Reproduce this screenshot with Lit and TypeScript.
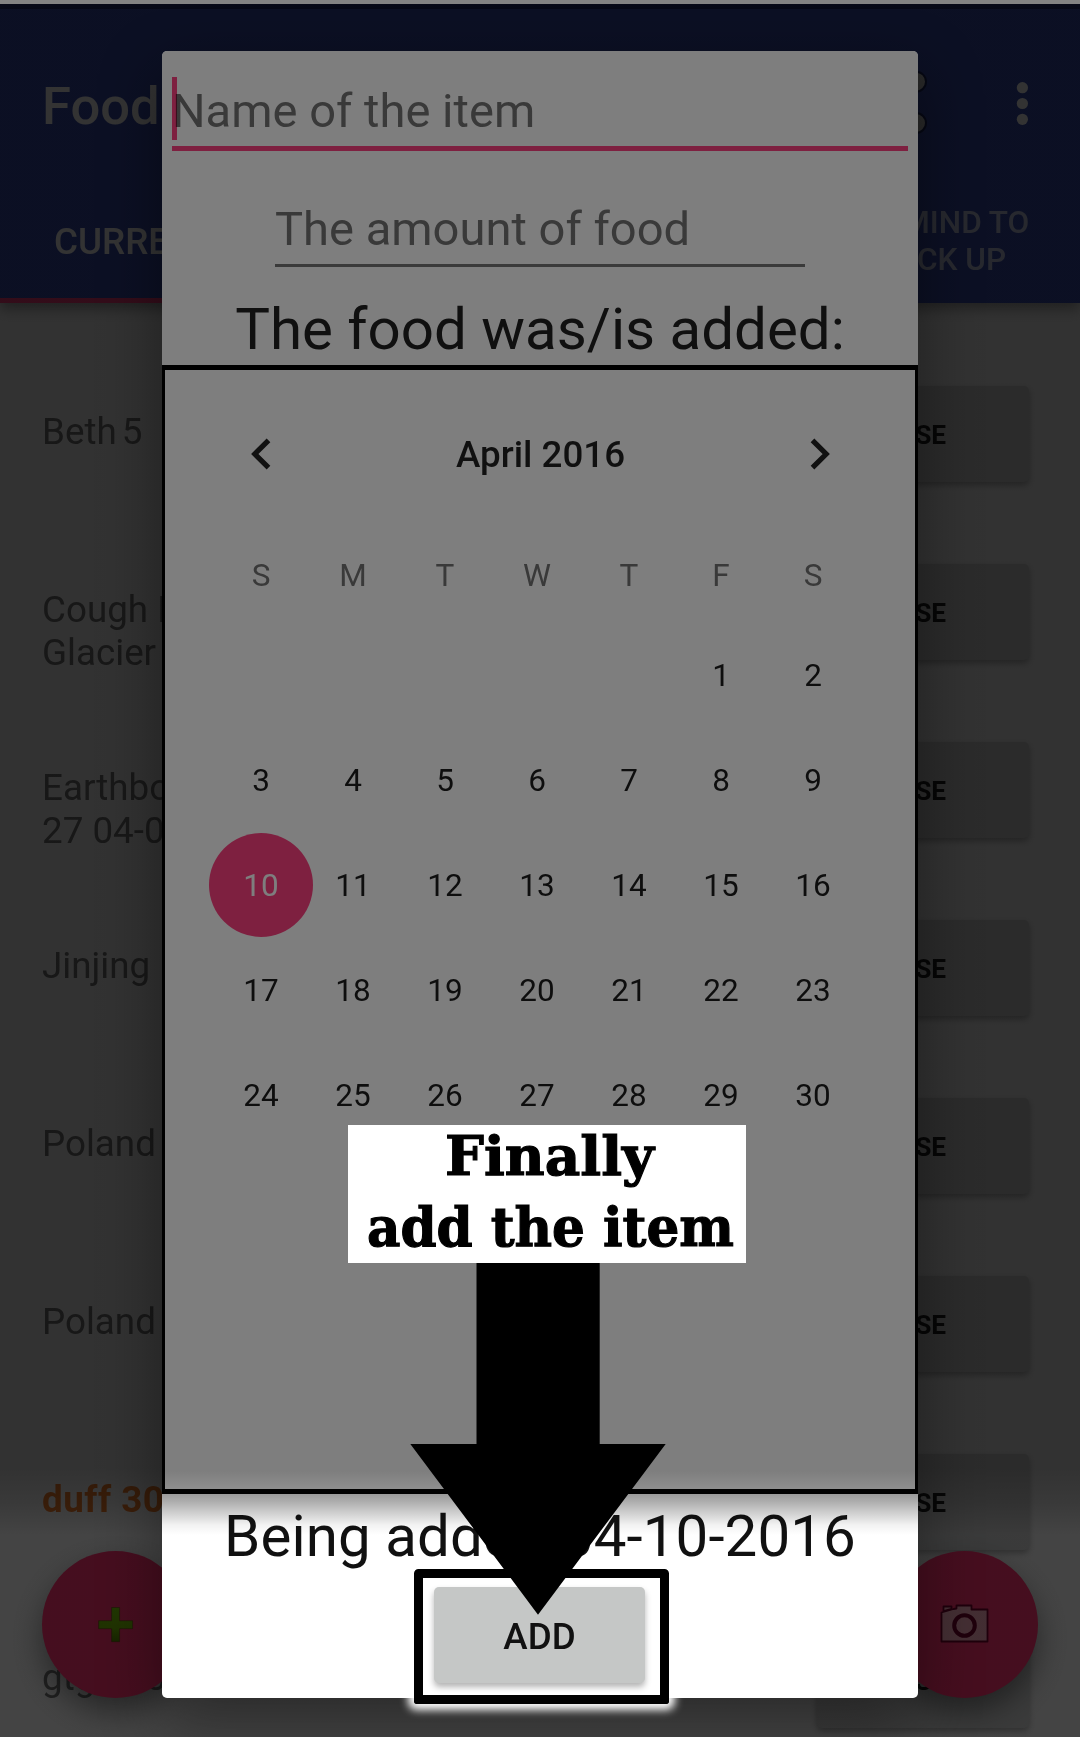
import { LitElement, html, css, svg } from "lit";
import { customElement } from "lit/decorators.js";
import { classMap } from "lit/directives/class-map.js";

interface FoodItem {
  name: string;
  warn?: boolean;
  tight?: boolean;
}

const ITEMS: FoodItem[] = [
  { name: "Beth 5", tight: true },
  { name: "Cough Mix\nGlacier" },
  { name: "Earthbound\n27 04-09" },
  { name: "Jinjing" },
  { name: "Poland" },
  { name: "Poland" },
  { name: "duff 30", warn: true },
  { name: "gtg 300" },
];

const WEEKDAYS = ["S", "M", "T", "W", "T", "F", "S"];
const FIRST_WEEKDAY = 5;
const DAYS = 30;
const SELECTED = 10;

@customElement("food-list")
export class FoodList extends LitElement {
  static styles = css`
    :host {
      display: block;
      height: 100%;
      isolation: isolate;
      font-family: Roboto, "Liberation Sans", sans-serif;
      background: #fafafa;
    }
    .status {
      height: 9px;
      background: #242f78;
    }
    .bar {
      position: relative;
      z-index: 1;
      height: 294px;
      box-sizing: border-box;
      background: #3b4fb2;
      color: #fff;
      box-shadow: 0 6px 12px rgba(0, 0, 0, 0.35);
      display: flex;
      flex-direction: column;
    }
    .top {
      height: 189px;
      display: flex;
      align-items: center;
      justify-content: space-between;
      padding-left: 42px;
    }
    .title {
      font-size: 52.5px;
      font-weight: 500;
      line-height: 60px;
      padding-top: 5px;
    }
    .actions {
      display: flex;
      width: 200px;
      height: 189px;
    }
    .tabs {
      flex: 1;
      display: grid;
      grid-template-columns: 360px 360px 360px;
      font-weight: 500;
    }
    .tab {
      text-align: center;
    }
    .current {
      font-size: 36.75px;
      line-height: 60px;
      text-align: left;
      padding: 14px 0 0 54px;
      border-bottom: 5px solid #ff4081;
    }
    .remind {
      font-size: 31.5px;
      line-height: 37px;
      padding: 6px 0 0 94px;
      white-space: pre;
      color: rgba(255, 255, 255, 0.7);
    }
    .rows {
      display: flex;
      flex-direction: column;
      padding: 83px 51px 0 42px;
    }
    .row {
      height: 178px;
      display: flex;
      justify-content: space-between;
      align-items: flex-start;
    }
    .name {
      font-size: 36.75px;
      line-height: 43px;
      padding-top: 24px;
      white-space: pre;
      color: #757575;
    }
    .tight {
      word-spacing: -4px;
    }
    .warn {
      font-weight: 700;
      letter-spacing: 0.5px;
      color: #f07a28;
    }
    .use {
      width: 212px;
      height: 96px;
      border-radius: 5px;
      background: #d6d7d7;
      box-shadow: 0 3px 6px rgba(0, 0, 0, 0.3);
      color: rgba(0, 0, 0, 0.87);
      font-size: 26.25px;
      font-weight: 700;
      line-height: 98px;
      text-indent: -2px;
      text-align: center;
    }
  `;

  render() {
    return html`
      <div class="status"></div>
      <div class="bar">
        <div class="top">
          <div class="title">Food</div>
          <svg class="actions" viewBox="880 9 200 189">
            <g fill="#ccc" stroke="#1c2660" stroke-width="2">
              <path d="M890 102L916 82M890 102L916 123" stroke="#fff" stroke-width="5" />
              <circle cx="916" cy="81.7" r="10" />
              <circle cx="916" cy="123" r="10" />
              <circle cx="890" cy="102" r="10" />
            </g>
            <g fill="#fff">
              <circle cx="1022.4" cy="87.7" r="5.6" />
              <circle cx="1022.4" cy="103.5" r="5.6" />
              <circle cx="1022.4" cy="119.3" r="5.6" />
            </g>
          </svg>
        </div>
        <div class="tabs">
          <div class="tab current">CURRENT</div>
          <div></div>
          <div class="tab remind">REMIND TO
PICK UP</div>
        </div>
      </div>
      <div class="rows">
        ${ITEMS.map(
          (i) => html`<div class="row">
            <div class=${classMap({ name: true, warn: !!i.warn, tight: !!i.tight })}>${i.name}</div>
            <div class="use">USE</div>
          </div>`,
        )}
      </div>
    `;
  }
}

@customElement("add-dialog")
export class AddDialog extends LitElement {
  static styles = css`
    :host {
      display: block;
      position: relative;
      width: 756px;
      height: 1647px;
      overflow: hidden;
      border-radius: 5px;
      background: #fff;
      color: rgba(0, 0, 0, 0.87);
      font-family: Roboto, "Liberation Sans", sans-serif;
    }
    .field {
      box-sizing: border-box;
      font-size: 47.1px;
      line-height: 71px;
      color: #747474;
      white-space: nowrap;
    }
    .item {
      position: relative;
      height: 100px;
      margin: 0 10px;
      padding-top: 24px;
      border-bottom: 5px solid #ff4081;
    }
    .caret {
      position: absolute;
      left: 0;
      top: 26px;
      width: 5px;
      height: 63px;
      background: #ff4081;
      mix-blend-mode: multiply;
    }
    .amount {
      height: 116px;
      margin: 0 113px;
      padding-top: 42px;
      border-bottom: 3px solid #757575;
    }
    .heading {
      font-size: 58.25px;
      text-align: center;
      white-space: nowrap;
      color: #202020;
    }
    .added {
      height: 98px;
      box-sizing: border-box;
      padding-top: 26px;
      line-height: 72px;
    }
    .calendar {
      height: 1129px;
      padding-left: 53px;
    }
    .week {
      display: grid;
      grid-template-columns: repeat(7, 92px);
      justify-items: center;
      align-items: center;
      font-size: 31.5px;
    }
    .head {
      height: 178px;
      padding-bottom: 2px;
    }
    .month {
      grid-column: 2 / 7;
      font-size: 36.75px;
      font-weight: 500;
      padding-left: 7px;
    }
    .chev {
      width: 40px;
      height: 40px;
    }
    .names {
      height: 60px;
      line-height: 62px;
      color: #747474;
    }
    .days {
      grid-auto-rows: 105px;
      padding-top: 17.5px;
      color: #1c1c1c;
    }
    .day {
      width: 104px;
      height: 104px;
      margin: 0 -6px;
      line-height: 105px;
      text-align: center;
      border-radius: 50%;
    }
    .selected {
      background: #ff4081;
      color: #fff;
    }
    .being {
      line-height: 85px;
      letter-spacing: 0.08px;
      color: #111;
    }
    .add {
      width: 211px;
      height: 96px;
      margin: 8px 0 0 272px;
      border-radius: 5px;
      background: #c5c7c6;
      box-shadow: 0 4px 6px rgba(0, 0, 0, 0.3);
      color: #111;
      font-size: 36.75px;
      font-weight: 500;
      line-height: 99px;
      text-align: center;
    }
    .dim {
      position: absolute;
      inset: 0;
      background: linear-gradient(
        to bottom,
        rgba(0, 0, 0, 0.505) 0,
        rgba(0, 0, 0, 0.505) 1420px,
        rgba(0, 0, 0, 0.44) 1439px,
        rgba(0, 0, 0, 0.35) 1448px,
        rgba(0, 0, 0, 0.19) 1462px,
        rgba(0, 0, 0, 0.05) 1474px,
        rgba(0, 0, 0, 0) 1484px
      );
    }
    .frame {
      position: absolute;
      left: 0;
      right: 0;
      top: 314px;
      height: 1129px;
      box-sizing: border-box;
      border: solid #000;
      border-width: 5px 3px;
    }
  `;

  private chevron(d: string) {
    return html`<svg class="chev" viewBox="0 0 40 40">
      ${svg`<path d=${d} fill="none" stroke="#222" stroke-width="5.2" />`}
    </svg>`;
  }

  render() {
    const days = Array.from({ length: DAYS }, (_, i) => i + 1);
    return html`
      <div class="field item">Name of the item<span class="caret"></span></div>
      <div class="field amount">The amount of food</div>
      <div class="heading added">The food was/is added:</div>
      <div class="calendar">
        <div class="week head">
          ${this.chevron("M27.5 6.3L13.8 20L27.5 33.7")}
          <div class="month">April 2016</div>
          ${this.chevron("M19.5 6.3L33.2 20L19.5 33.7")}
        </div>
        <div class="week names">${WEEKDAYS.map((d) => html`<span>${d}</span>`)}</div>
        <div class="week days">
          ${Array.from({ length: FIRST_WEEKDAY }, () => html`<span></span>`)}
          ${days.map(
            (d) => html`<span class=${classMap({ day: true, selected: d === SELECTED })}>${d}</span>`,
          )}
        </div>
      </div>
      <div class="heading being">Being added:04-10-2016</div>
      <div class="add">ADD</div>
      <div class="dim"></div>
      <div class="frame"></div>
    `;
  }
}

@customElement("app-root")
export class AppRoot extends LitElement {
  static styles = css`
    :host {
      display: block;
      position: relative;
      width: 1080px;
      height: 1737px;
      overflow: hidden;
      background: #fafafa;
    }
    .layer {
      position: absolute;
      inset: 0;
    }
    .fab {
      position: absolute;
      top: 1551px;
      width: 147px;
      height: 147px;
      border-radius: 50%;
      background: #ff3370;
      box-shadow: 0 14px 30px rgba(0, 0, 0, 0.42);
    }
    .plus {
      left: 42px;
    }
    .camera {
      left: 891px;
    }
    .scrim {
      background: rgba(0, 0, 0, 0.6);
    }
    .shade {
      position: absolute;
      left: 162px;
      top: 51px;
      width: 756px;
      height: 1647px;
      border-radius: 5px;
      box-shadow: 0 22px 62px rgba(0, 0, 0, 0.4);
    }
    .dim {
      background: linear-gradient(
        to bottom,
        rgba(0, 0, 0, 0.5) 0,
        rgba(0, 0, 0, 0.5) 1468px,
        rgba(0, 0, 0, 0.43) 1502px,
        rgba(0, 0, 0, 0.32) 1535px
      );
    }
    .edge {
      position: absolute;
      left: 0;
      right: 0;
      top: 0;
      height: 4px;
      background: #838383;
    }
    .dialog {
      position: absolute;
      left: 162px;
      top: 51px;
    }
    .ring {
      position: absolute;
      left: 414px;
      top: 1569px;
      width: 237px;
      height: 117px;
      border: 9px solid #000;
      border-radius: 3px;
      box-shadow: 0 0 9px 6px #fff;
    }
    .note {
      font-family: "DejaVu Serif", "Liberation Serif", serif;
      font-weight: 700;
    }
  `;

  render() {
    return html`
      <food-list></food-list>
      <div class="fab plus">
        <svg width="147" height="147" viewBox="0 0 147 147">
          <defs>
            <linearGradient id="g" x1="0" y1="0" x2="0" y2="1">
              <stop offset="0" stop-color="#78c808" />
              <stop offset="0.6" stop-color="#74b806" />
              <stop offset="1" stop-color="#528400" />
            </linearGradient>
          </defs>
          <path
            d="M69.6 56.5h8v13.2h13v8h-13v13h-8v-13H56.6v-8h13z"
            fill="url(#g)"
            stroke="#5a3c10"
            stroke-opacity=".5"
          />
        </svg>
      </div>
      <div class="fab camera">
        <svg width="147" height="147" viewBox="0 0 147 147">
          <g fill="#f8aabb" stroke="#70002c" stroke-width="1.8" stroke-linejoin="round">
            <path d="M50.500 61.500L62.500 58L65.500 57.500V54.500H80.500V58.500H96.500V90.500H50.500z" />
            <path d="M52.500 60V55.500H60.500V57.800z" />
            <circle cx="73.500" cy="74.500" r="10.300" stroke-width="4" />
          </g>
        </svg>
      </div>
      <div class="layer scrim"></div>
      <div class="shade"></div>
      <div class="layer dim"></div>
      <div class="edge"></div>
      <div class="ring"></div>
      <add-dialog class="dialog"></add-dialog>
      <svg class="layer" width="1080" height="1737" viewBox="0 0 1080 1737">
        <rect x="418.500" y="1573.500" width="246" height="126" fill="none" stroke="#000" stroke-width="9" stroke-linejoin="round" />
        <path d="M476.500 1200H599.700V1444H665.700L538 1614.700L410.300 1444H476.500z" fill="#000" />
        <rect x="348" y="1125" width="398" height="138" fill="#fff" />
        <g class="note" font-size="55" stroke="#000" stroke-width="1.2">
          <text x="445" y="1174.500" textLength="209" lengthAdjust="spacingAndGlyphs">Finally</text>
          <text x="367" y="1246" textLength="367" lengthAdjust="spacingAndGlyphs">add the item</text>
        </g>
      </svg>
    `;
  }
}
